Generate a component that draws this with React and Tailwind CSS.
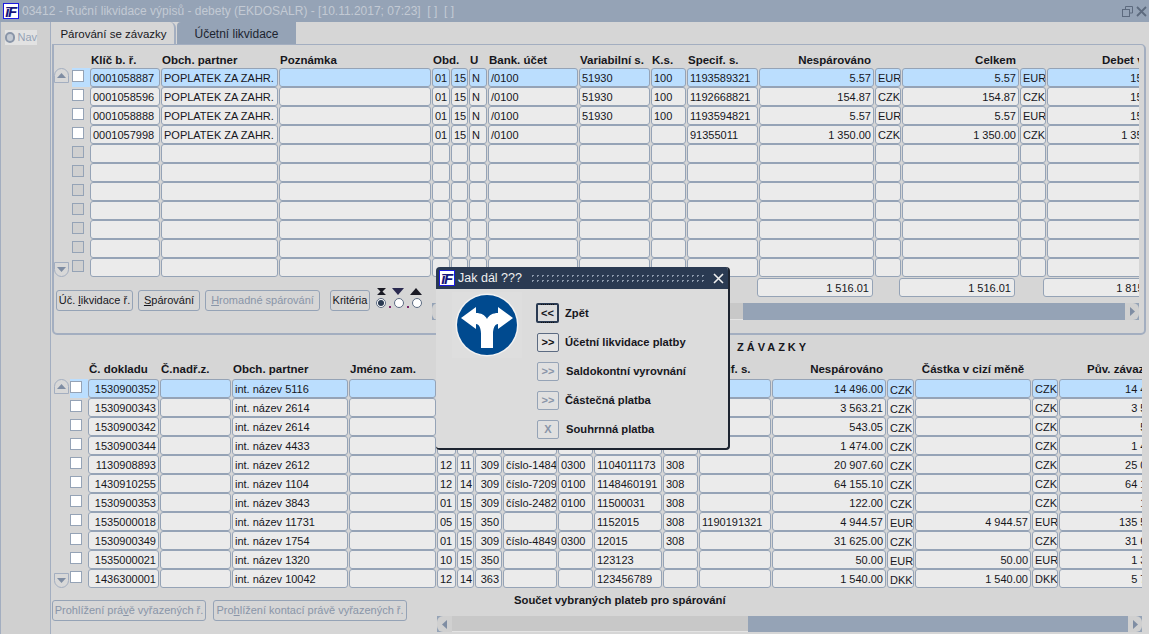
import React from 'react'

const topCols = "grid grid-cols-[70px_117px_152px_18px_17px_18px_90px_71px_35px_71px_115px_26px_117px_26px_120px] gap-x-px w-max"
const bottomCols = "grid grid-cols-[71px_71px_116px_87px_19px_17px_27px_54px_35px_68px_35px_72px_114px_27px_116px_26px_118px] gap-x-px w-max"

const topHeaders = [
  ['Klíč b. ř.', ''], ['Obch. partner', ''], ['Poznámka', ''], ['Obd.', ''], ['', ''], ['U', ''], ['Bank. účet', ''],
  ['Variabilní s.', ''], ['K.s.', ''], ['Specif. s.', ''], ['Nespárováno', 'r'], ['', ''], ['Celkem', 'r'], ['', ''], ['Debet v Kč', 'k'],
]
const topAlign = ['', '', '', '', '', '', '', '', '', '', 'r', '', 'r', '', 'r']
const topRows = [
  ['0001058887', 'POPLATEK ZA ZAHR.', '', '01', '15', 'N', '/0100', '51930', '100', '1193589321', '5.57', 'EUR', '5.57', 'EUR', '154.87'],
  ['0001058596', 'POPLATEK ZA ZAHR.', '', '01', '15', 'N', '/0100', '51930', '100', '1192668821', '154.87', 'CZK', '154.87', 'CZK', '154.87'],
  ['0001058888', 'POPLATEK ZA ZAHR.', '', '01', '15', 'N', '/0100', '51930', '100', '1193594821', '5.57', 'EUR', '5.57', 'EUR', '154.87'],
  ['0001057998', 'POPLATEK ZA ZAHR.', '', '01', '15', 'N', '/0100', '', '', '91355011', '1 350.00', 'CZK', '1 350.00', 'CZK', '1 350.00'],
  ...Array.from({ length: 7 }, () => Array(15).fill('')),
]

const bottomHeaders = [
  ['Č. dokladu', ''], ['Č.nadř.z.', ''], ['Obch. partner', ''], ['Jméno zam.', ''], ['Obd.', ''], ['', ''], ['U', ''], ['', ''], ['', ''], ['', ''], ['', ''],
  ['Specif. s.', ''], ['Nespárováno', 'r'], ['', ''], ['Částka v cizí měně', 'c'], ['', ''], ['Pův. závazek', 'l'],
]
const bottomAlign = ['r', '', '', '', '', '', 'r', '', '', '', '', '', 'r', 'd', 'r', '', 'r']
const bottomRows = [
  ['1530900352', '', 'int. název 5116', '', '', '', '', '', '', '', '', '', '14 496.00', 'CZK', '', 'CZK', '14 496.00'],
  ['1530900343', '', 'int. název 2614', '', '', '', '', '', '', '', '', '', '3 563.21', 'CZK', '', 'CZK', '3 563.21'],
  ['1530900342', '', 'int. název 2614', '', '', '', '', '', '', '', '', '', '543.05', 'CZK', '', 'CZK', '543.05'],
  ['1530900344', '', 'int. název 4433', '', '', '', '', '', '', '', '', '', '1 474.00', 'CZK', '', 'CZK', '1 474.00'],
  ['1130908893', '', 'int. název 2612', '', '12', '11', '309', 'číslo-1484', '0300', '1104011173', '308', '', '20 907.60', 'CZK', '', 'CZK', '25 000.00'],
  ['1430910255', '', 'int. název 1104', '', '12', '14', '309', 'číslo-7209', '0100', '1148460191', '308', '', '64 155.10', 'CZK', '', 'CZK', '64 155.10'],
  ['1530900353', '', 'int. název 3843', '', '01', '15', '309', 'číslo-2482', '0100', '11500031', '308', '', '122.00', 'CZK', '', 'CZK', '122.00'],
  ['1535000018', '', 'int. název 11731', '', '05', '15', '350', '', '', '1152015', '308', '1190191321', '4 944.57', 'EUR', '4 944.57', 'EUR', '135 500.00'],
  ['1530900349', '', 'int. název 1754', '', '01', '15', '309', 'číslo-4849', '0300', '12015', '308', '', '31 625.00', 'CZK', '', 'CZK', '31 625.00'],
  ['1535000021', '', 'int. název 1320', '', '10', '15', '350', '', '', '123123', '', '', '50.00', 'EUR', '50.00', 'EUR', '1 300.00'],
  ['1436300001', '', 'int. název 10042', '', '12', '14', '363', '', '', '123456789', '', '', '1 540.00', 'DKK', '1 540.00', 'DKK', '5 700.00'],
]

const Logo = () => (
  <div className="w-[16px] h-[16px] shrink-0 bg-white border border-[#1a1ae0] flex items-center justify-center overflow-hidden">
    <span className="font-bold italic text-[15px] leading-none text-[#14147c] tracking-[-1.5px] pr-px">īF</span>
  </div>
)

const Cell = ({ value, align, active }) => (
  <div className={`h-[19px] border border-[#95a3b6] rounded-[3px] px-[2px] whitespace-nowrap overflow-hidden text-[#16161c] ${align === 'd' ? 'leading-[20px]' : 'leading-[18px]'} ${active ? 'bg-[#bbdefe]' : 'bg-[#ebebeb]'} ${align === 'r' ? 'text-right' : 'text-left'}`}>
    {value}
  </div>
)

const Checkbox = ({ active, empty }) => (
  <div className={`w-[18px] h-[19px] pt-[2px] ${active ? 'bg-[#bbdefe]' : ''}`}>
    <div className={`w-[12px] h-[12px] border border-[#95a3b6] ${empty ? 'bg-[#d0d0d0]' : 'bg-white'}`} />
  </div>
)

const RoundArrow = ({ down }) => (
  <div className={`w-[15px] h-[15px] border border-[#a3aec0] bg-[#d8d8d8] flex items-center justify-center ${down ? 'rounded-b-full' : 'rounded-t-full'}`}>
    <svg width="9" height="5" viewBox="0 0 9 5">
      <path d={down ? 'M0 0H9L4.5 5Z' : 'M0 5H9L4.5 0Z'} fill="#7f8da3" />
    </svg>
  </div>
)

const headerAlign = (a) => {
  if (a === 'r') return 'text-right pr-[3px]'
  if (a === 'c') return 'text-center'
  if (a === 'l') return 'pl-[28px]'
  if (a === 'k') return 'pl-[55px]'
  return 'pl-px'
}

const Table = ({ cols, headers, rows, align, headerClass, width, railClass }) => (
  <div className="flex flex-col">
    <div className={`flex ${headerClass}`}>
      <div className={`shrink-0 ${railClass}`} />
      <div className="w-[18px] shrink-0" />
      <div className={`overflow-hidden ${width}`}>
        <div className={cols}>
          {headers.map(([h, a], i) => (
            <div key={i} className={`font-bold text-[11.5px] leading-[14px] whitespace-nowrap text-[#16161c] ${headerAlign(a)}`}>{h}</div>
          ))}
        </div>
      </div>
    </div>
    <div className="flex">
      <div className={`shrink-0 flex flex-col justify-between ${railClass}`}>
        <RoundArrow />
        <RoundArrow down />
      </div>
      <div className="w-[18px] shrink-0">
        {rows.map((row, i) => (
          <Checkbox key={i} active={i === 0} empty={row.every(v => v === '')} />
        ))}
      </div>
      <div className={`overflow-hidden ${width}`}>
        {rows.map((row, i) => (
          <div key={i} className={cols}>
            {row.map((v, j) => <Cell key={j} value={v} align={align[j]} active={i === 0} />)}
          </div>
        ))}
      </div>
    </div>
  </div>
)

const Btn = ({ children, disabled, className = '' }) => (
  <div className={`h-[21px] border border-[#95a3b6] rounded-[3px] flex items-center justify-center whitespace-nowrap ${disabled ? 'text-[#8995a8]' : 'text-[#16161c]'} ${className}`}>
    <span>{children}</span>
  </div>
)

const Scrollbar = ({ className, thumb }) => (
  <div className={`flex bg-[#95a3b6] ${className}`}>
    <div className="w-[15px] bg-[#d0d0d0] rounded-l-[6px] flex items-center justify-center shrink-0">
      <svg width="5" height="9" viewBox="0 0 5 9"><path d="M5 0V9L0 4.5Z" fill="#7f8da3" /></svg>
    </div>
    <div className={`bg-[#c8c8c8] border-b border-[#e4e4e4] ${thumb}`} />
    <div className="flex-1" />
    <div className="w-[14px] bg-[#d0d0d0] rounded-r-[6px] flex items-center justify-center shrink-0">
      <svg width="5" height="9" viewBox="0 0 5 9"><path d="M0 0V9L5 4.5Z" fill="#7f8da3" /></svg>
    </div>
  </div>
)

const SortRadios = () => (
  <div className="flex flex-col ml-[6px] mt-[-2px]">
    <div className="flex items-center gap-[6px] pl-px">
      <svg width="9" height="7" viewBox="0 0 9 7"><path d="M0 0H9L5.5 3.5L9 7H0L3.5 3.5Z" fill="#1a1a24" /></svg>
      <svg width="12" height="7" viewBox="0 0 12 7"><path d="M0 0H12L6 7Z" fill="#2a2a50" /></svg>
      <svg width="12" height="7" viewBox="0 0 12 7"><path d="M0 7H12L6 0Z" fill="#1a1a24" /></svg>
    </div>
    <div className="flex items-end gap-[3px] mt-[3px]">
      <div className="w-[10px] h-[10px] rounded-full border border-[#5c6b82] bg-white flex items-center justify-center">
        <div className="w-[6px] h-[6px] rounded-full bg-[#2a3a52]" />
      </div>
      <div className="w-[2px] h-[2px] bg-[#7a2a6a]" />
      <div className="w-[10px] h-[10px] rounded-full border border-[#5c6b82] bg-white" />
      <div className="w-[2px] h-[2px] bg-[#7a2a6a]" />
      <div className="w-[10px] h-[10px] rounded-full border border-[#5c6b82] bg-white" />
    </div>
  </div>
)

const SumCell = ({ value, className }) => (
  <div className={`h-[19px] border border-[#95a3b6] rounded-[3px] bg-[#ebebeb] text-right px-[3px] leading-[18px] overflow-hidden whitespace-nowrap shrink-0 ${className}`}>{value}</div>
)

const Sign = () => (
  <div className="w-[70px] h-[66px] bg-[#dedede] flex items-center justify-center">
    <svg width="64" height="64" viewBox="0 0 64 64">
      <circle cx="32" cy="32" r="31.5" fill="#f2f2f2" />
      <circle cx="32" cy="32" r="30" fill="#004a8f" />
      <path d="M26 55V41C26 35 24 31 21 31V36L6 25L21 14V20C26 20 30 22 32 26C34 22 38 20 43 20V14L58 25L43 36V31C40 31 38 35 38 41V55Z" fill="#ffffff" />
    </svg>
  </div>
)

const ModalBtn = ({ label, text, disabled, focus, className = '', labelClass = 'ml-[6px]' }) => (
  <div className={`flex items-center ${className}`}>
    <div className={`flex items-center justify-center shrink-0 rounded-[2px] ${focus ? 'w-[23px] h-[20px] border-2 border-[#2a3a52] bg-[#dcdcdc]' : disabled ? 'w-[22px] h-[19px] border border-[#95a3b6] bg-[#e0e0e0] text-[#8995a8]' : 'w-[22px] h-[19px] border border-[#5c6b82] bg-[#e4e4e4] text-[#111]'}`}>
      <span className={`font-bold text-[11px] leading-none ${focus ? 'border-y border-dotted border-[#111] py-[3px]' : ''}`}>{label}</span>
    </div>
    <span className={`font-bold text-[11.2px] text-[#16161c] whitespace-nowrap ${labelClass}`}>{text}</span>
  </div>
)

const Modal = () => (
  <div className="absolute left-[436px] top-[267px] w-[294px] h-[183px] bg-[#dcdcdc] rounded-[4px] border-r-2 border-b-2 border-[#1d2430] flex flex-col overflow-hidden">
    <div className="h-[22px] bg-[#2a3a52] flex items-center pl-[3px] pr-[4px] shrink-0">
      <Logo />
      <span className="ml-[3px] text-[#f0f0f0] text-[12.5px] whitespace-nowrap">Jak dál ???</span>
      <div className="flex-1 mx-[8px] h-[11px] bg-[radial-gradient(#8b98ab_1px,transparent_1px)] bg-[length:5px_5px]" />
      <svg width="11" height="11" viewBox="0 0 11 11"><path d="M1 1L10 10M10 1L1 10" stroke="#f0f0f0" strokeWidth="1.6" /></svg>
    </div>
    <div className="flex flex-1">
      <div className="pl-[16px] pt-[3px] shrink-0"><Sign /></div>
      <div className="flex flex-col ml-[14px] pt-[14px]">
        <ModalBtn label="<<" text="Zpět" focus />
        <ModalBtn label=">>" text="Účetní likvidace platby" className="mt-[10px] pl-px" />
        <ModalBtn label=">>" text="Saldokontní vyrovnání" disabled className="mt-[10px] pl-px" labelClass="ml-[7px]" />
        <ModalBtn label=">>" text="Částečná platba" disabled className="mt-[10px] pl-px" />
        <ModalBtn label="X" text="Souhrnná platba" disabled className="mt-[10px] pl-px" labelClass="ml-[7px]" />
      </div>
    </div>
  </div>
)

export default function App() {
  return (
    <div className="relative w-[1149px] h-[634px] overflow-hidden bg-[#d6d6d6] font-['Liberation_Sans',sans-serif] text-[11px] text-[#16161c]">
      <div className="h-[22px] bg-[#95a3b6] flex items-center pl-[3px] pr-[2px]">
        <Logo />
        <span className="ml-[3px] text-[12px] text-[#c3cad4] whitespace-pre">03412 - Ruční likvidace výpisů - debety (EKDOSALR) - [10.11.2017; 07:23]  [ ]  [ ]</span>
        <div className="flex-1" />
        <svg width="11" height="11" viewBox="0 0 11 11" fill="none" stroke="#5d6a7e"><path d="M3.5 3V.5H10.5V7H8" /><rect x=".5" y="3.5" width="7" height="7" /></svg>
        <svg className="ml-[3px]" width="11" height="11" viewBox="0 0 11 11"><path d="M1 1L10 10M10 1L1 10" stroke="#5d6a7e" strokeWidth="1.8" /></svg>
      </div>

      <div className="flex h-[612px]">
        <div className="w-[51px] shrink-0 bg-[#d0d0d0] border-x border-[#a3aec0] pt-[8px] pl-[4px]">
          <div className="w-[32px] h-[15px] bg-[#e2e2e2] flex items-center">
            <div className="w-[11px] h-[11px] rounded-full border-2 border-[#8995a8] bg-[#c4cad3]" />
            <span className="ml-[2px] text-[#95a3b6]">Nav</span>
          </div>
        </div>

        <div className="flex-1 min-w-0 flex flex-col">
          <div className="h-[22px] flex shrink-0">
            <div className="w-[123px] ml-[2px] border-r-2 border-[#a3aec0] rounded-tr-[6px] bg-[#d6d6d6] text-center leading-[24px] text-[11.5px] whitespace-nowrap">Párování se závazky</div>
            <div className="w-[119px] ml-[1px] bg-[#95a3b6] rounded-tl-[4px] text-center leading-[24px] text-[12px] whitespace-nowrap text-[#1c2430]">Účetní likvidace</div>
          </div>

          <div className="w-[1094px] h-[291px] shrink-0 ml-px border-t border-r-2 border-b-2 border-l-2 border-[#a3aec0] rounded-r-[5px] rounded-bl-[5px] flex flex-col">
            <Table cols={topCols} headers={topHeaders} rows={topRows} align={topAlign} headerClass="pt-[8px] h-[23px]" width="w-[1049px]" railClass="w-[18px]" />

            <div className="flex">
              <div className="w-[378px] shrink-0 pt-[13px] pl-[2px] flex items-start">
                <Btn className="w-[77px]">Úč. <u>l</u>ikvidace ř.</Btn>
                <Btn className="w-[62px] ml-[5px]"><u>S</u>párování</Btn>
                <Btn disabled className="w-[115px] ml-[5px]"><u>H</u>romadné spárování</Btn>
                <Btn className="w-[40px] ml-[10px]">Kritéria</Btn>
                <SortRadios />
              </div>
              <div className="w-[707px] shrink-0 flex flex-col">
                <div className="flex h-[26px] pt-px overflow-hidden">
                  <SumCell value="1 516.01" className="ml-[325px] w-[116px]" />
                  <SumCell value="1 516.01" className="ml-[26px] w-[116px]" />
                  <SumCell value="1 815.38" className="ml-[28px] w-[120px]" />
                </div>
                <Scrollbar className="h-[17px]" thumb="w-[296px]" />
              </div>
            </div>
          </div>

          <div className="h-[26px] shrink-0 pl-[686px] pt-[4px] font-bold text-[11px] tracking-[3px] whitespace-nowrap">ZÁVAZKY</div>

          <Table cols={bottomCols} headers={bottomHeaders} rows={bottomRows} align={bottomAlign} headerClass="h-[18px] pt-px" width="w-[1054px]" railClass="w-[19px] pl-[3px]" />

          <div className="flex">
            <div className="w-[386px] shrink-0 pt-[12px] pl-px flex items-start">
              <Btn disabled className="w-[154px]">Prohlížení prá<u>v</u>ě vyřazených ř.</Btn>
              <Btn disabled className="w-[194px] ml-[7px]">Pro<u>h</u>lížení kontací právě vyřazených ř.</Btn>
            </div>
            <div className="w-[705px] flex flex-col">
              <div className="h-[28px] pl-[77px] pt-[4px] font-bold text-[11.3px] whitespace-nowrap">Součet vybraných plateb pro spárování</div>
              <Scrollbar className="h-[16px]" thumb="w-[296px]" />
            </div>
          </div>
        </div>
      </div>

      <Modal />
    </div>
  )
}
